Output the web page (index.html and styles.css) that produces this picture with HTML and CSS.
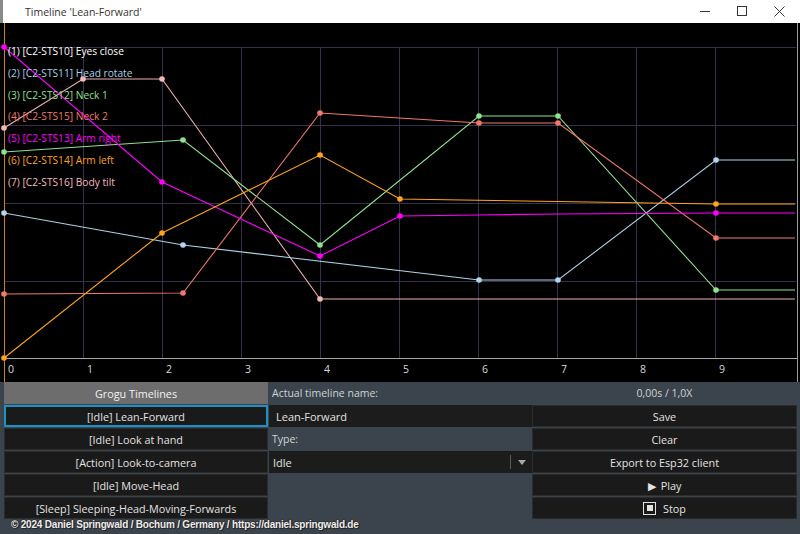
FILE: index.html
```html
<!DOCTYPE html>
<html>
<head>
<meta charset="utf-8">
<title>Timeline 'Lean-Forward'</title>
<link rel="stylesheet" href="styles.css">
</head>
<body>
<div class="window">
  <div class="titlebar">
    <span class="title">Timeline 'Lean-Forward'</span>
    <div class="controls">
      <svg class="ctl" width="36" height="23" viewBox="0 0 36 23"><line x1="14" y1="11.5" x2="24" y2="11.5" stroke="#333" stroke-width="1"/></svg>
      <svg class="ctl" width="38" height="23" viewBox="0 0 38 23"><rect x="15.5" y="6.5" width="9" height="9" fill="none" stroke="#333" stroke-width="1"/></svg>
      <svg class="ctl" width="40" height="23" viewBox="0 0 40 23"><path d="M14.5 6.5 L24.5 16.5 M24.5 6.5 L14.5 16.5" stroke="#333" stroke-width="1"/></svg>
    </div>
  </div>
  <div class="chart">
    <svg width="800" height="359" viewBox="0 23 800 359">
      <rect x="0" y="23" width="800" height="359" fill="#000"/>
      <g stroke="#35314d" stroke-width="1">
        <line x1="4" y1="47.5" x2="796" y2="47.5"/>
        <line x1="4" y1="125.5" x2="796" y2="125.5"/>
        <line x1="4" y1="203.5" x2="796" y2="203.5"/>
        <line x1="4" y1="281.5" x2="796" y2="281.5"/>
        <line x1="83.5" y1="47" x2="83.5" y2="358"/>
        <line x1="162.5" y1="47" x2="162.5" y2="358"/>
        <line x1="241.5" y1="47" x2="241.5" y2="358"/>
        <line x1="320.5" y1="47" x2="320.5" y2="358"/>
        <line x1="399.5" y1="47" x2="399.5" y2="358"/>
        <line x1="478.5" y1="47" x2="478.5" y2="358"/>
        <line x1="557.5" y1="47" x2="557.5" y2="358"/>
        <line x1="636.5" y1="47" x2="636.5" y2="358"/>
        <line x1="715.5" y1="47" x2="715.5" y2="358"/>
      </g>
      <line x1="4" y1="358.5" x2="797" y2="358.5" stroke="#a8a8a8" stroke-width="1.2"/>
      <line x1="4.5" y1="23" x2="4.5" y2="382" stroke="#c8860a" stroke-width="1"/>
      <line x1="797.5" y1="23" x2="797.5" y2="382" stroke="#9a9a9a" stroke-width="1"/>
      <g font-family="'Open Sans', 'Noto Sans', sans-serif" font-size="10.5" fill="#d8d8d8">
        <text x="8" y="373">0</text>
        <text x="87" y="373">1</text>
        <text x="166" y="373">2</text>
        <text x="245" y="373">3</text>
        <text x="324" y="373">4</text>
        <text x="403" y="373">5</text>
        <text x="482" y="373">6</text>
        <text x="561" y="373">7</text>
        <text x="640" y="373">8</text>
        <text x="719" y="373">9</text>
      </g>
      <g fill="none" stroke-width="1.1">
        <polyline stroke="#f0b0b0" points="4,128 83,79 162,79 320,299 795,299"/>
        <polyline stroke="#a9d2e6" points="4,213 183,245 479,280 558,280 716,160 795,160"/>
        <polyline stroke="#8ee28e" points="4,152 183,140 320,245 479,116 558,116 716,290 795,290"/>
        <polyline stroke="#f07a6a" points="4,294 183,293 320,113 479,123 558,123 716,238 795,238"/>
        <polyline stroke="#ff00ff" points="4,47 162,182 320,256 400,216 479,215 558,214 716,213 795,213"/>
        <polyline stroke="#ffa41a" points="4,358 162,233 320,155 400,199 716,204 795,204"/>
      </g>
      <g>
        <g fill="#f4b8b8"><circle cx="4" cy="128" r="2.8"/><circle cx="83" cy="79" r="2.8"/><circle cx="162" cy="79" r="2.8"/><circle cx="320" cy="299" r="2.8"/></g>
        <g fill="#b0d8ec"><circle cx="4" cy="213" r="2.8"/><circle cx="183" cy="245" r="2.8"/><circle cx="479" cy="280" r="2.8"/><circle cx="558" cy="280" r="2.8"/><circle cx="716" cy="160" r="2.8"/></g>
        <g fill="#8ee28e"><circle cx="4" cy="152" r="2.8"/><circle cx="183" cy="140" r="2.8"/><circle cx="320" cy="245" r="2.8"/><circle cx="479" cy="116" r="2.8"/><circle cx="558" cy="116" r="2.8"/><circle cx="716" cy="290" r="2.8"/></g>
        <g fill="#f07a6a"><circle cx="4" cy="294" r="2.8"/><circle cx="183" cy="293" r="2.8"/><circle cx="320" cy="113" r="2.8"/><circle cx="479" cy="123" r="2.8"/><circle cx="558" cy="123" r="2.8"/><circle cx="716" cy="238" r="2.8"/></g>
        <g fill="#ff00ff"><circle cx="4" cy="47" r="2.8"/><circle cx="162" cy="182" r="2.8"/><circle cx="320" cy="256" r="2.8"/><circle cx="400" cy="216" r="2.8"/><circle cx="716" cy="213" r="2.8"/></g>
        <g fill="#ffa41a"><circle cx="4" cy="358" r="2.8"/><circle cx="162" cy="233" r="2.8"/><circle cx="320" cy="155" r="2.8"/><circle cx="400" cy="199" r="2.8"/><circle cx="716" cy="204" r="2.8"/></g>
      </g>
      <g font-family="'Open Sans', 'Noto Sans', sans-serif" font-size="10.2">
        <text x="8" y="55" fill="#ffffff">(1) [C2-STS10] Eyes close</text>
        <text x="8" y="77" fill="#a9d2e6">(2) [C2-STS11] Head rotate</text>
        <text x="8" y="99" fill="#8ee28e">(3) [C2-STS12] Neck 1</text>
        <text x="8" y="120" fill="#f07a6a">(4) [C2-STS15] Neck 2</text>
        <text x="8" y="142" fill="#ff00ff">(5) [C2-STS13] Arm right</text>
        <text x="8" y="164" fill="#ffa41a">(6) [C2-STS14] Arm left</text>
        <text x="8" y="186" fill="#f4bcbc">(7) [C2-STS16] Body tilt</text>
      </g>
    </svg>
  </div>
  <div class="panel">
    <div class="col">
      <div class="colhead">Grogu Timelines</div>
      <div class="btn selected">[Idle] Lean-Forward</div>
      <div class="btn">[Idle] Look at hand</div>
      <div class="btn">[Action] Look-to-camera</div>
      <div class="btn">[Idle] Move-Head</div>
      <div class="btn">[Sleep] Sleeping-Head-Moving-Forwards</div>
    </div>
    <div class="col">
      <div class="label">Actual timeline name:</div>
      <div class="input">Lean-Forward</div>
      <div class="label">Type:</div>
      <div class="select"><span class="selval">Idle</span><span class="divider"></span><span class="arrow"></span></div>
    </div>
    <div class="col">
      <div class="status">0,00s / 1,0X</div>
      <div class="btn">Save</div>
      <div class="btn">Clear</div>
      <div class="btn">Export to Esp32 client</div>
      <div class="btn"><span class="play">&#9654;</span>Play</div>
      <div class="btn"><span class="stopicon"><span class="stopinner"></span></span>Stop</div>
    </div>
  </div>
  <div class="footer">© 2024 Daniel Springwald / Bochum / Germany / https://daniel.springwald.de</div>
</div>
</body>
</html>
```
FILE: styles.css
```css
html, body {
  margin: 0;
  padding: 0;
  background: #3b444c;
}
.window {
  position: relative;
  width: 800px;
  height: 534px;
  overflow: hidden;
  font-family: "Open Sans", "Noto Sans", sans-serif;
}
.titlebar {
  height: 23px;
  background: #ffffff;
  display: flex;
  align-items: center;
  justify-content: space-between;
  border-left: 3px solid #8a8a8a;
  box-sizing: border-box;
}
.title {
  font-size: 10.5px;
  color: #333;
  padding-left: 22px;
}
.controls {
  display: flex;
}
.ctl {
  display: block;
}
.chart {
  height: 359px;
  background: #000;
}
.chart svg {
  display: block;
}
.panel {
  height: 152px;
  box-sizing: border-box;
  display: grid;
  grid-template-columns: 264px 264px 265px;
  padding-left: 4px;
  background: #3b444c;
}
.col {
  display: flex;
  flex-direction: column;
  gap: 1px;
}
.colhead {
  height: 22px;
  background: #6d6d6d;
  color: #f2f2f2;
  font-size: 10.8px;
  display: flex;
  align-items: center;
  justify-content: center;
}
.status, .label {
  height: 22px;
  color: #cfd3d6;
  font-size: 10.5px;
  display: flex;
  align-items: center;
}
.status {
  justify-content: center;
}
.label {
  padding-left: 4px;
}
.btn {
  height: 22px;
  box-sizing: border-box;
  background: #1a1a1a;
  border: 1px solid #2c2c2c;
  color: #e2e2e2;
  font-size: 10.8px;
  display: flex;
  align-items: center;
  justify-content: center;
}
.btn.selected {
  border: 2px solid #1b92c4;
}
.input {
  height: 22px;
  box-sizing: border-box;
  margin-left: 1px;
  background: #1c1c1c;
  color: #e2e2e2;
  font-size: 11px;
  padding-left: 7px;
  display: flex;
  align-items: center;
}
.select {
  height: 22px;
  box-sizing: border-box;
  margin-left: 1px;
  background: #1c1c1c;
  color: #e2e2e2;
  font-size: 11px;
  padding-left: 4px;
  display: flex;
  align-items: center;
}
.selval {
  flex: 1;
}
.divider {
  width: 1px;
  height: 14px;
  background: #5a5a5a;
}
.arrow {
  width: 0;
  height: 0;
  margin: 0 6px 0 7px;
  border-left: 4px solid transparent;
  border-right: 4px solid transparent;
  border-top: 5px solid #a8a8a8;
}
.play {
  font-size: 11px;
  margin-right: 5px;
}
.stopicon {
  width: 13px;
  height: 13px;
  box-sizing: border-box;
  border: 1.5px solid #e2e2e2;
  display: flex;
  align-items: center;
  justify-content: center;
  margin-right: 7px;
}
.stopinner {
  width: 6px;
  height: 6px;
  background: #e2e2e2;
}
.footer {
  position: absolute;
  left: 11px;
  top: 519px;
  font-family: "Liberation Sans", Arial, sans-serif;
  font-weight: bold;
  font-size: 10px;
  letter-spacing: -0.2px;
  color: #ececec;
  text-shadow: 1px 1px 0 #222, -1px 0 0 #333, 0 -1px 0 #333, 1px 0 0 #222;
}
```
